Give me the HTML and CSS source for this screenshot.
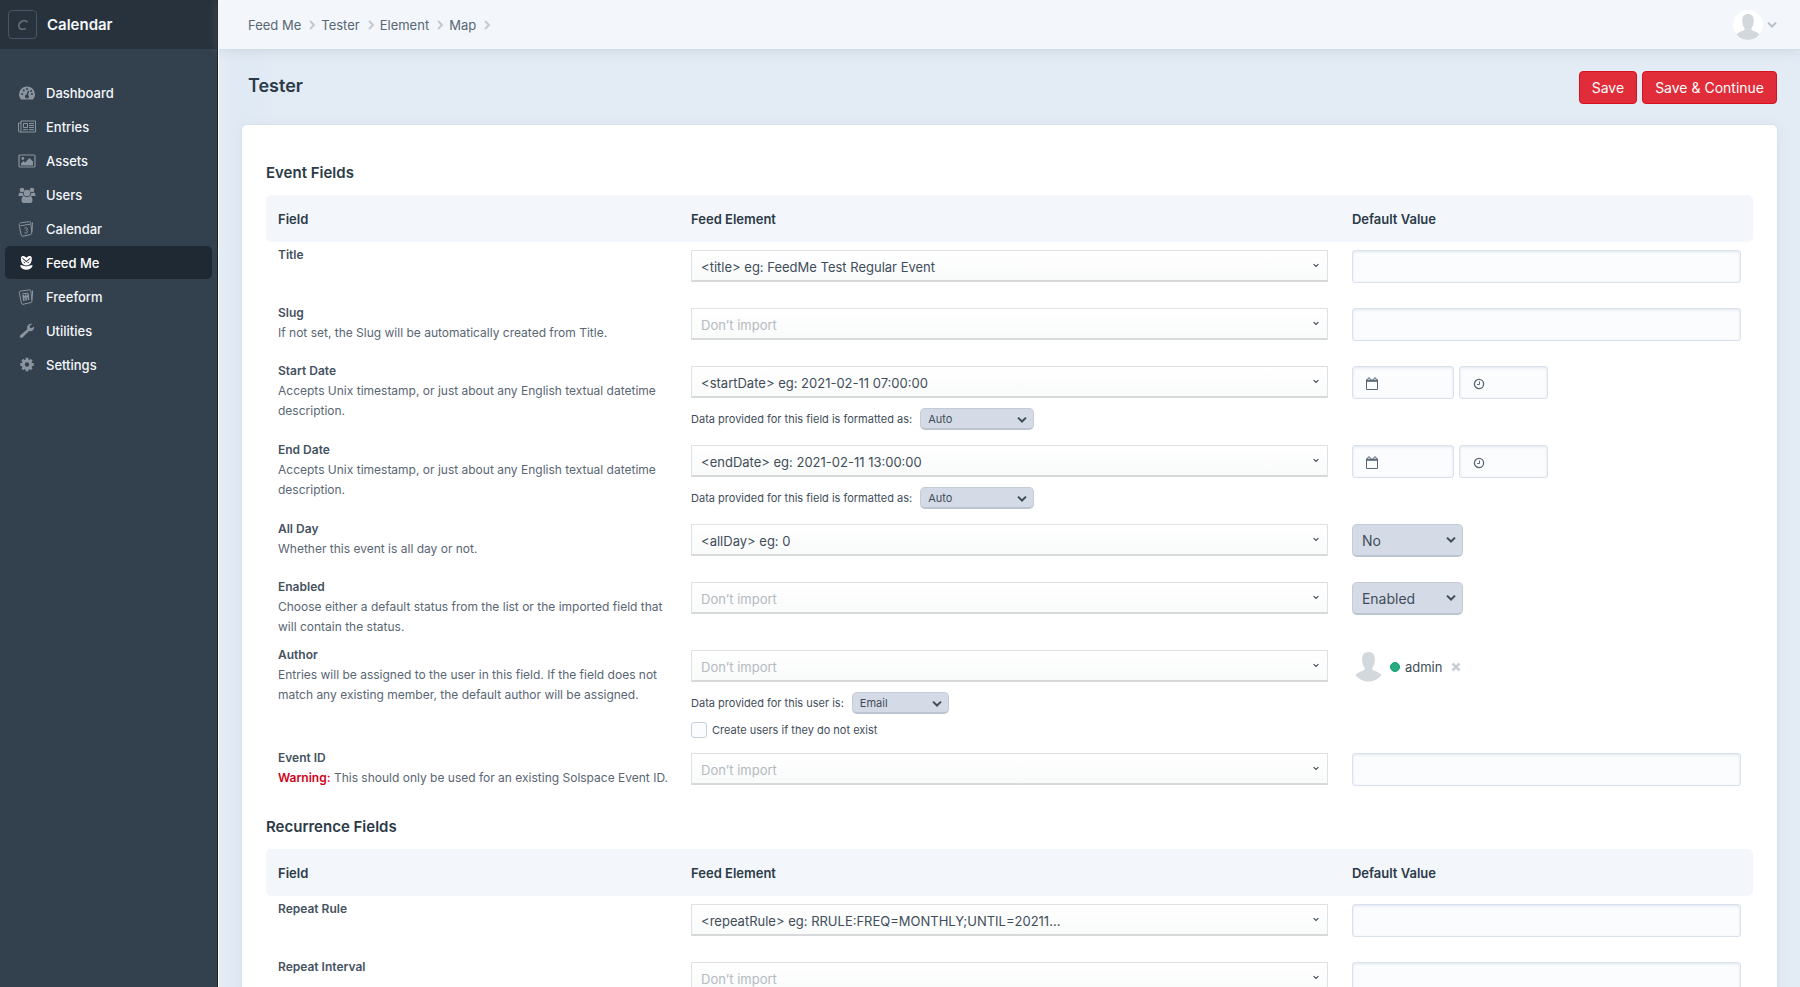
FILE: index.html
```html
<!DOCTYPE html>
<html lang="en">
<head>
<meta charset="utf-8">
<title>Tester</title>
<link rel="stylesheet" href="styles.css">
</head>
<body>
<svg class="sprite" aria-hidden="true">
  <symbol id="i-chevron-right" viewBox="0 0 8 10"><path d="M2 1l4 4-4 4" fill="none" stroke="currentColor" stroke-width="2"/></symbol>
  <symbol id="i-caret" viewBox="0 0 10 8"><path d="M1 1.6l4 3.9 4-3.9" fill="none" stroke="currentColor" stroke-width="2"/></symbol>
  <symbol id="i-person" viewBox="0 0 26 30"><path d="M13 0c4.200 0 6.400 2.800 6.400 7 0 3.600-.8 6.600-2.200 8.400-.7 1-.8 2.300.6 2.900 3.400 1.300 6.200 2.300 8.200 4.700C23 27 18.500 29.500 13 29.500S3 27 0 23c2-2.400 4.800-3.400 8.200-4.700 1.400-.6 1.300-1.900.6-2.900C7.400 13.600 6.600 10.600 6.600 7c0-4.200 2.200-7 6.400-7z" fill="#d3d8dc"/></symbol>
  <symbol id="i-date" viewBox="0 0 14 14"><path d="M1.500 3.500h11v9h-11z" fill="none" stroke="currentColor" stroke-width="1"/><path d="M1 2.500h12v2.300H1z" fill="currentColor"/><circle cx="4" cy="2.200" r="1.300" fill="#fbfcfe" stroke="currentColor"/><circle cx="10" cy="2.200" r="1.300" fill="#fbfcfe" stroke="currentColor"/></symbol>
  <symbol id="i-time" viewBox="0 0 14 14"><circle cx="7" cy="7" r="4.600" fill="none" stroke="currentColor" stroke-width="1.300"/><path d="M7.500 4.500v3H5.200" fill="none" stroke="currentColor" stroke-width="1"/></symbol>
</svg>
<div class="app">
  <aside class="sidebar">
    <a class="site" href="#"><span class="site-icon"><svg width="12" height="12" viewBox="0 0 12 12"><path d="M10.500 3.300C9.500 1.700 7.600 1.300 5.800 1.900 3.500 2.700 1.800 5 1.900 7.200c.1 3 3.600 3.900 6.800 2.200" fill="none" stroke="currentColor" stroke-width="1.700"/></svg></span><span>Calendar</span></a>
    <nav class="nav">
      <a href="#"><svg viewBox="0 0 18 16"><path fill="currentColor" fill-rule="evenodd" d="M3 14.500C1.700 13 1 11.300 1 9.500a8 8 0 0 1 16 0c0 1.800-.7 3.500-2 5zM3.200 9a1 1 0 1 0 2 0 1 1 0 0 0-2 0zM4.800 5.500a1 1 0 1 0 2 0 1 1 0 0 0-2 0zM8 4a1 1 0 1 0 2 0 1 1 0 0 0-2 0zM13 9a1 1 0 1 0 2 0 1 1 0 0 0-2 0zM12 6a1 1 0 1 0 2 0 1 1 0 0 0-2 0zM10 5.500L8.600 9.600C7.500 9.800 7 10.700 7 11.500a2 2 0 0 0 4 0c0-.7-.4-1.300-1-1.600L11.200 6z"/></svg>Dashboard</a>
      <a href="#"><svg viewBox="0 0 18 16"><path fill="none" stroke="currentColor" d="M3 2h14.500v11H2C1 13 .5 12.500.5 12V4H3zM3 4v8c0 .6-.4 1-1 1M5.500 4.500h4v4h-4zM11 4.500h5M11 6.500h5M11 8.500h5M5 10.700h5M11 10.700h5"/></svg>Entries</a>
      <a href="#"><svg viewBox="0 0 18 16"><rect x="1" y="2" width="16" height="12" rx="1" fill="none" stroke="currentColor" stroke-width="1.200"/><circle cx="4.800" cy="5.500" r="1.400" fill="currentColor"/><path fill="currentColor" d="M3 12.500v-2L5.500 8 7 9.500 11.500 5 15 8.500v4z"/></svg>Assets</a>
      <a href="#"><svg viewBox="0 0 18 16"><g fill="currentColor"><circle cx="4" cy="3" r="2.300"/><circle cx="14" cy="3" r="2.300"/><circle cx="9" cy="6" r="3.300"/><path d="M.5 9c0-2 .6-3.500 1.700-3.500.8.500 1.800.7 2.700.5C4.900 7.500 5.300 8 6 9H2C1 9 .5 9 .5 9zM17.500 9c0-2-.6-3.500-1.700-3.500-.8.500-1.800.7-2.700.5 0 1.500-.4 2-1.100 3h5.500zM3.500 13.500c0-3 1-4.500 2.500-4.500 1.800 1.300 4.200 1.300 6 0 1.500 0 2.500 1.500 2.500 4.500 0 1.300-.8 2.500-2 2.500h-7c-1.200 0-2-1.200-2-2.500z"/></g></svg>Users</a>
      <a href="#"><svg viewBox="0 0 18 16"><g fill="none" stroke="currentColor"><path d="M4 1.500l7.500-.8c.8 0 1.200.3 1.300 1l1 10.300c0 .8-.3 1.300-1 1.500l-8 1.800c-.8.100-1.300-.2-1.500-1L1.200 4.500C1 2.600 2.500 1.700 4 1.500zM2.500 4.800l10-1.700M14.500 3.500v-2M14.500 3.500l-.6 7.500"/><path d="M6.300 7.300c1.200-1 3.400-.7 2.900 1-.2.700-.9.900-1.400 1 1.600 0 2.200 1.200 1.400 2.200-.8.800-2 .8-2.700.3"/></g></svg>Calendar</a>
      <a class="active" href="#"><svg viewBox="0 0 18 18"><path fill="currentColor" fill-rule="evenodd" d="M2.300 2.500C3.500.5 6 .8 8.300 3 10.600.8 13.100.5 14.300 2.500c.4 3-.2 6.500-2.600 8.300-2 1.300-4.800 1.300-6.800 0C2.500 9 1.900 5.500 2.300 2.500zM3.700 2.800l4.600 3.900 4.600-3.900-.2 1.500-4.400 3.800-4.400-3.800zM4.500 7.300l2.200 2.400.4-1.200zM12.100 7.300l-2.200 2.400-.4-1.200zM1.200 11.500c2.300-.2 4.300.6 7.100 1.500 2.800-.9 4.800-1.700 7.100-1.500-.6 3.300-3.400 5-7.100 5s-6.500-1.700-7.100-5z"/></svg>Feed Me</a>
      <a href="#"><svg viewBox="0 0 18 16"><g fill="none" stroke="currentColor"><path d="M3 2l8.500-1.200c.8 0 1.200.3 1.300 1L14 12c0 .8-.3 1.300-1 1.500l-8 1.800c-.8.100-1.300-.2-1.500-1L1.200 3.500C1.200 2.600 1.700 2.200 3 2zM4 5l6.500-1M14.500 1.500V5M14.500 5l-.6 6"/><path stroke-width="1.600" d="M5 6l1 6M7.500 5.500l.8 6M10 5l.6 6M5 8l5-.8"/></g></svg>Freeform</a>
      <a href="#"><svg viewBox="0 0 18 16"><path fill="currentColor" d="M16 3.700l-2.700 1.500-1.500-.8-.1-1.600L14.300 1C11.800.2 8.900 2 9.100 5c0 .5.100.9.200 1.200L2.600 12c-.9.900-.9 1.900-.3 2.500.6.700 1.700.6 2.500-.2L11 7.900c2.700 1 5.600-1.300 5-4.200z"/></svg>Utilities</a>
      <a href="#"><svg viewBox="0 0 18 16"><circle cx="9" cy="7.500" r="3.700" fill="none" stroke="currentColor" stroke-width="3"/><path d="M9 .8v2.500M9 11.700v2.500M2.300 7.500h2.500M13.200 7.500h2.500M4.300 2.800L6 4.500M12 10.500l1.700 1.700M4.300 12.200L6 10.500M12 4.500l1.700-1.700" stroke="currentColor" stroke-width="2.800"/></svg>Settings</a>
    </nav>
  </aside>
  <div class="main">
    <header class="topbar">
      <nav class="crumbs">
        <a href="#">Feed Me</a><svg><use href="#i-chevron-right"/></svg>
        <a href="#">Tester</a><svg><use href="#i-chevron-right"/></svg>
        <a href="#">Element</a><svg><use href="#i-chevron-right"/></svg>
        <a href="#">Map</a><svg><use href="#i-chevron-right"/></svg>
      </nav>
      <button class="account" type="button" aria-label="My account"><span class="avatar"><svg class="avatar-img"><use href="#i-person"/></svg></span><svg class="account-caret"><use href="#i-caret"/></svg></button>
    </header>
    <form class="page">
      <div class="page-head">
        <h1>Tester</h1>
        <div class="actions"><button class="btn" type="button">Save</button><button class="btn" type="button">Save &amp; Continue</button></div>
      </div>
      <div class="card">
        <h2>Event Fields</h2>
        <table class="map">
          <thead><tr><th>Field</th><th class="wide">Feed Element</th><th>Default Value</th></tr></thead>
          <tbody>
            <tr>
              <td><label class="name" for="title">Title</label></td>
              <td><div class="pick"><select id="title"><option>&lt;title&gt; eg: FeedMe Test Regular Event</option></select><svg><use href="#i-caret"/></svg></div></td>
              <td><input class="text" type="text" aria-label="Default title"></td>
            </tr>
            <tr>
              <td><label class="name" for="slug">Slug</label><p>If not set, the Slug will be automatically created from Title.</p></td>
              <td><div class="pick empty"><select id="slug"><option>Don’t import</option></select><svg><use href="#i-caret"/></svg></div></td>
              <td><input class="text" type="text" aria-label="Default slug"></td>
            </tr>
            <tr>
              <td><label class="name" for="start">Start Date</label><p>Accepts Unix timestamp, or just about any English textual datetime description.</p></td>
              <td><div class="pick"><select id="start"><option>&lt;startDate&gt; eg: 2021-02-11 07:00:00</option></select><svg><use href="#i-caret"/></svg></div>
                <div class="sub"><label for="startfmt">Data provided for this field is formatted as:</label><div class="drop small"><select id="startfmt"><option>Auto</option></select><svg><use href="#i-caret"/></svg></div></div></td>
              <td><div class="when"><div class="field date"><svg><use href="#i-date"/></svg><input type="text" aria-label="Default start date"></div><div class="field time"><svg><use href="#i-time"/></svg><input type="text" aria-label="Default start time"></div></div></td>
            </tr>
            <tr>
              <td><label class="name" for="end">End Date</label><p>Accepts Unix timestamp, or just about any English textual datetime description.</p></td>
              <td><div class="pick"><select id="end"><option>&lt;endDate&gt; eg: 2021-02-11 13:00:00</option></select><svg><use href="#i-caret"/></svg></div>
                <div class="sub"><label for="endfmt">Data provided for this field is formatted as:</label><div class="drop small"><select id="endfmt"><option>Auto</option></select><svg><use href="#i-caret"/></svg></div></div></td>
              <td><div class="when"><div class="field date"><svg><use href="#i-date"/></svg><input type="text" aria-label="Default end date"></div><div class="field time"><svg><use href="#i-time"/></svg><input type="text" aria-label="Default end time"></div></div></td>
            </tr>
            <tr>
              <td><label class="name" for="allday">All Day</label><p>Whether this event is all day or not.</p></td>
              <td><div class="pick"><select id="allday"><option>&lt;allDay&gt; eg: 0</option></select><svg><use href="#i-caret"/></svg></div></td>
              <td><div class="drop"><select aria-label="Default all day"><option>No</option></select><svg><use href="#i-caret"/></svg></div></td>
            </tr>
            <tr>
              <td><label class="name" for="enabled">Enabled</label><p>Choose either a default status from the list or the imported field that will contain the status.</p></td>
              <td><div class="pick empty"><select id="enabled"><option>Don’t import</option></select><svg><use href="#i-caret"/></svg></div></td>
              <td><div class="drop"><select aria-label="Default status"><option>Enabled</option></select><svg><use href="#i-caret"/></svg></div></td>
            </tr>
            <tr>
              <td><label class="name" for="author">Author</label><p>Entries will be assigned to the user in this field. If the field does not match any existing member, the default author will be assigned.</p></td>
              <td><div class="pick empty"><select id="author"><option>Don’t import</option></select><svg><use href="#i-caret"/></svg></div>
                <div class="sub"><label for="authfmt">Data provided for this user is:</label><div class="drop small email"><select id="authfmt"><option>Email</option></select><svg><use href="#i-caret"/></svg></div></div>
                <div class="check"><input type="checkbox" id="create"><label for="create">Create users if they do not exist</label></div></td>
              <td><div class="user"><svg class="user-img"><use href="#i-person"/></svg><span class="dot"></span><span>admin</span><button type="button" aria-label="Remove admin"><svg viewBox="0 0 10 10"><path d="M1.500 1.500l7 7M8.500 1.500l-7 7" stroke="#c9ced4" stroke-width="2.600"/></svg></button></div></td>
            </tr>
            <tr>
              <td><label class="name" for="eventid">Event ID</label><p><strong>Warning:</strong> This should only be used for an existing Solspace Event ID.</p></td>
              <td><div class="pick empty"><select id="eventid"><option>Don’t import</option></select><svg><use href="#i-caret"/></svg></div></td>
              <td><input class="text" type="text" aria-label="Default event ID"></td>
            </tr>
          </tbody>
        </table>
        <h2>Recurrence Fields</h2>
        <table class="map">
          <thead><tr><th>Field</th><th class="wide">Feed Element</th><th>Default Value</th></tr></thead>
          <tbody>
            <tr>
              <td><label class="name" for="rule">Repeat Rule</label></td>
              <td><div class="pick"><select id="rule"><option>&lt;repeatRule&gt; eg: RRULE:FREQ=MONTHLY;UNTIL=20211...</option></select><svg><use href="#i-caret"/></svg></div></td>
              <td><input class="text" type="text" aria-label="Default repeat rule"></td>
            </tr>
            <tr>
              <td><label class="name" for="interval">Repeat Interval</label></td>
              <td><div class="pick empty"><select id="interval"><option>Don’t import</option></select><svg><use href="#i-caret"/></svg></div></td>
              <td><input class="text" type="text" aria-label="Default repeat interval"></td>
            </tr>
          </tbody>
        </table>
      </div>
    </form>
  </div>
</div>
</body>
</html>
```
FILE: styles.css
```css
* { box-sizing: border-box; }

body {
  margin: 0;
  font: 13px/20px Inter, "Liberation Sans", sans-serif;
  color: #3f4d5a;
}

button, input, select { font: inherit; color: inherit; margin: 0; }
a { color: inherit; text-decoration: none; }
p { margin: 0; }
.sprite { display: none; }

.app { display: flex; height: 100vh; overflow: hidden; }

/* Sidebar */
.sidebar {
  flex: 0 0 218px;
  background: #33404d;
  border-right: 1px solid #1b242d;
  color: #f3f7fc;
}
.site {
  display: flex;
  align-items: center;
  gap: 10px;
  height: 49px;
  padding: 0 8px;
  background: #28323c;
  font-size: 15px;
  font-weight: 600;
}
.site-icon {
  display: flex;
  align-items: center;
  justify-content: center;
  width: 29px;
  height: 29px;
  border: 1px solid #465668;
  border-radius: 4px;
  color: #5f6c78;
}
.nav {
  display: flex;
  flex-direction: column;
  gap: 1px;
  padding: 27px 5px 0 5px;
}
.nav a {
  display: flex;
  align-items: center;
  gap: 10px;
  height: 33px;
  padding: 0 13px;
  border-radius: 5px;
  font-weight: 500;
}
.nav svg { width: 18px; height: 16px; color: #8b959f; }
.nav .active { background: #1f2933; color: #fff; }
.nav .active svg { color: #fff; }

/* Top bar */
.main {
  flex: 1;
  min-width: 0;
  border-left: 1px solid #fff;
  background: linear-gradient(90deg, #e4ecf5, #e0eaf4 22px, #e3ebf5 60px);
}
.topbar {
  display: flex;
  align-items: center;
  justify-content: space-between;
  height: 49px;
  padding: 0 23px 0 29px;
  background: #f3f7fc;
  box-shadow: 0 1px 0 #d3dde8, 0 2px 12px rgba(154, 165, 177, .3);
}
.crumbs { display: flex; align-items: center; color: #596673; }
.crumbs svg { width: 8px; height: 10px; margin: 0 5px 0 7px; color: #c3cad3; }
.account {
  display: flex;
  align-items: center;
  gap: 4px;
  padding: 0;
  border: 0;
  background: none;
}
.avatar {
  display: flex;
  justify-content: center;
  width: 30px;
  height: 30px;
  padding-top: 4px;
  border-radius: 50%;
  overflow: hidden;
  background: #fff;
}
.avatar-img { width: 24px; height: 27px; flex: none; }
.account-caret { width: 10px; height: 8px; color: #b6bfc9; }

/* Page */
.page { padding: 22px 23px 0; }
.page-head {
  display: flex;
  justify-content: space-between;
  height: 54px;
  padding-left: 6px;
}
h1 { margin: 4px 0 0; font-size: 18px; line-height: 22px; font-weight: 600; color: #2c3a48; }
.actions { display: flex; align-items: flex-start; gap: 5px; }
.btn {
  height: 33px;
  padding: 0 12px;
  border: 1px solid #d9121f;
  border-radius: 4px;
  background: #e12d39;
  color: #fff;
  font-size: 14px;
}
.card {
  padding: 37px 24px 100px;
  border-radius: 5px;
  background: #fff;
  box-shadow: 0 0 0 1px #d9e3ee, 0 2px 12px rgba(205, 216, 228, .5);
}
h2 { margin: 0 0 11px; font-size: 15px; line-height: 22px; font-weight: 600; color: #2c3a48; }
.map + h2 { margin-top: 13px; }

/* Mapping table */
.map { width: 100%; border-collapse: separate; border-spacing: 0; table-layout: fixed; }
.map th {
  height: 47px;
  padding: 0 12px;
  background: #f3f7fb;
  text-align: left;
  font-weight: 600;
  color: #2c3a48;
}
.map th:first-child { border-radius: 5px 0 0 5px; }
.map th:last-child { border-radius: 0 5px 5px 0; }
.map .wide { width: calc(100% * 8 / 18); }
.map td { height: 58px; padding: 8px 12px 7px; vertical-align: top; }
.map td:first-child { padding: 3px 0 5px 12px; font-size: 12px; color: #596673; }
.name { display: block; font-weight: 600; color: #45525f; }
.map strong { color: #d0021b; font-weight: 600; }

.pick, .drop { position: relative; }
.pick select, .drop select { appearance: none; display: block; width: 100%; outline: 0; }
.pick svg, .drop svg { position: absolute; pointer-events: none; }
.pick select {
  height: 32px;
  padding: 2px 30px 0 9px;
  border: 1px solid #e0e1e2;
  border-bottom: 2px solid #d8d9da;
  border-radius: 0;
  background: linear-gradient(#fff, #f9fafa);
}
.pick.empty select { color: #b3bac1; }
.pick svg { right: 9px; top: 13px; width: 6px; height: 5px; }

.drop { width: 111px; }
.drop select {
  height: 33px;
  padding: 1px 28px 0 9px;
  border: 1px solid #c3cbd8;
  border-bottom: 2px solid #bcc4d1;
  border-radius: 5px;
  background: #d5dbe6;
  font-size: 14px;
}
.drop svg { right: 7px; top: 12px; width: 10px; height: 8px; }
.drop.small { width: 114px; }
.drop.email { width: 97px; }
.drop.small select { height: 22px; padding: 0 24px 0 7px; font-size: 11px; }
.drop.small svg { top: 8px; }
.sub { display: flex; align-items: center; gap: 8px; margin-top: 10px; font-size: 11px; }

.text, .field {
  border: 1px solid #d8e1ec;
  border-radius: 3px;
  background: #fbfcfe;
  box-shadow: inset 0 1px 3px rgba(200, 212, 228, .5);
}
.text { display: block; width: 100%; height: 33px; padding: 0 9px; }
.when { display: flex; gap: 5px; }
.field { display: flex; align-items: center; height: 33px; padding: 2px 6px 0 12px; }
.field svg { flex: none; width: 14px; height: 14px; color: #596673; }
.field input { min-width: 0; width: 100%; border: 0; background: none; }
.date { width: 102px; }
.time { width: 89px; }

.check { display: flex; align-items: center; gap: 5px; height: 16px; margin-top: 8px; font-size: 11px; }
.check input {
  appearance: none;
  width: 16px;
  height: 16px;
  border: 1px solid #c5d0e0;
  border-radius: 3px;
  background: #fbfcfe;
}
.user { display: flex; align-items: center; height: 34px; padding-left: 3px; }
.user-img { width: 27px; height: 30px; margin-right: 8px; }
.dot { width: 10px; height: 10px; margin-right: 5px; border-radius: 50%; background: #27ab83; border: 1px solid #0f9c72; }
.user button { display: flex; margin-left: 9px; padding: 0; border: 0; background: none; }
.user button svg { width: 10px; height: 10px; }
```
